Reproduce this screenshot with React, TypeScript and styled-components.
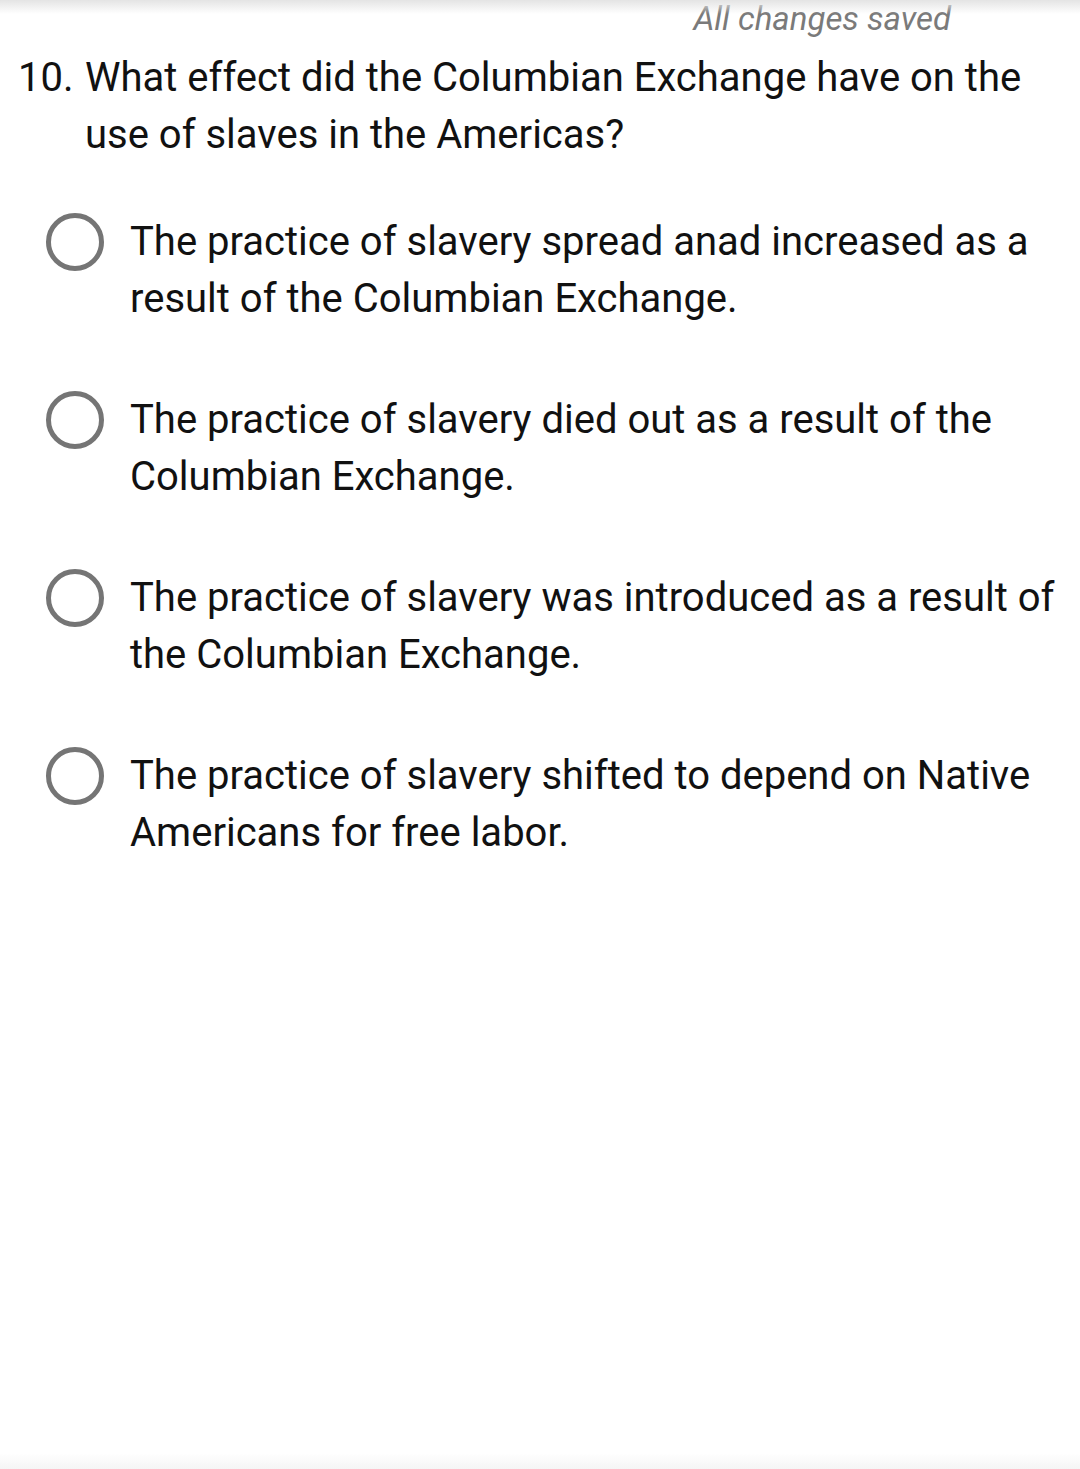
import { createGlobalStyle, styled } from 'styled-components'

const GlobalStyle = createGlobalStyle`
  html, body {
    margin: 0;
    padding: 0;
    background: #ffffff;
  }
  body {
    font-family: Roboto, "Noto Sans", "Liberation Sans", sans-serif;
    color: #111111;
  }
`

const options = [
  'The practice of slavery spread anad increased as a result of the Columbian Exchange.',
  'The practice of slavery died out as a result of the Columbian Exchange.',
  'The practice of slavery was introduced as a result of the Columbian Exchange.',
  'The practice of slavery shifted to depend on Native Americans for free labor.'
]

export default function App() {
  return (
    <>
      <GlobalStyle />
      <Page>
        <TopShade />
        <SavedStatus>All changes saved</SavedStatus>
        <Question>
          <QuestionNumber>10.</QuestionNumber>
          <QuestionText>
            What effect did the Columbian Exchange have on the use of slaves in
            the Americas?
          </QuestionText>
        </Question>
        <OptionList>
          {options.map((text) => (
            <Option key={text}>
              <Radio />
              <OptionText>{text}</OptionText>
            </Option>
          ))}
        </OptionList>
        <BottomShade />
      </Page>
    </>
  )
}

const Page = styled.div`
  position: relative;
  width: 1080px;
  height: 1469px;
  overflow: hidden;
  display: flex;
  flex-direction: column;
  background: #ffffff;
`

const TopShade = styled.div`
  position: absolute;
  top: 0;
  left: 0;
  right: 0;
  height: 14px;
  background: linear-gradient(to bottom, #e4e4e4, rgba(255, 255, 255, 0));
`

const BottomShade = styled.div`
  position: absolute;
  bottom: 0;
  left: 0;
  right: 0;
  height: 16px;
  background: linear-gradient(to top, #f5f5f5, rgba(255, 255, 255, 0));
`

const SavedStatus = styled.div`
  align-self: flex-end;
  margin-right: 129px;
  padding-top: 2px;
  font-size: 33px;
  line-height: 34px;
  font-style: italic;
  color: #7a7a7a;
`

const Question = styled.div`
  display: flex;
  margin-top: 13px;
  padding-left: 18px;
  padding-right: 30px;
  font-size: 40px;
  line-height: 57px;
  color: #111111;
`

const QuestionNumber = styled.span`
  width: 67px;
  flex-shrink: 0;
`

const QuestionText = styled.span`
  flex: 1;
`

const OptionList = styled.div`
  display: flex;
  flex-direction: column;
  gap: 64px;
  margin-top: 50px;
  padding-left: 46px;
  padding-right: 20px;
`

const Option = styled.div`
  display: flex;
  align-items: flex-start;
  gap: 26px;
`

const Radio = styled.span`
  box-sizing: border-box;
  flex-shrink: 0;
  width: 58px;
  height: 58px;
  border: 5px solid #757575;
  border-radius: 50%;
`

const OptionText = styled.span`
  font-size: 40px;
  line-height: 57px;
  color: #111111;
`
